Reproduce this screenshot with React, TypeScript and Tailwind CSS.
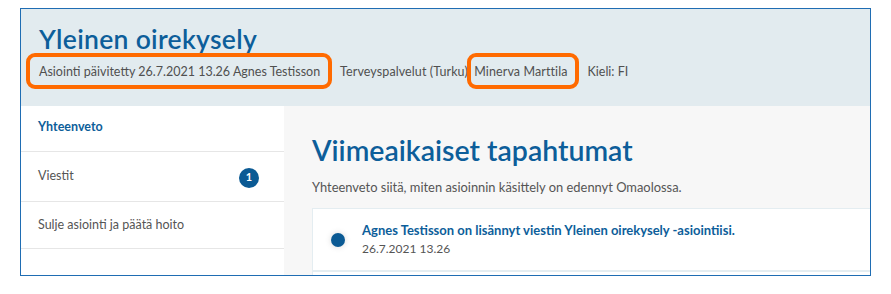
import React from "react";

export default function App() {
  return (
    <div className="w-[891px] h-[294px] bg-white pt-[8px] pl-[20px]" style={{ fontFamily: "Lato, 'Open Sans', sans-serif" }}>
      <div className="relative w-[851px] h-[268px] border border-[#1f6db3] overflow-hidden flex flex-col">
        {/* Header */}
        <div className="h-[97px] bg-[#e2ebef] pl-[18px] pt-[14px] shrink-0">
          <h1 className="text-[26.5px] leading-[32px] text-[#0d5e9a] font-semibold tracking-[0.3px]">Yleinen oirekysely</h1>
          <div className="mt-[9px] flex text-[12.5px] leading-[16px] text-[#505050]">
            <span>Asiointi päivitetty 26.7.2021 13.26 Agnes Testisson</span>
            <span className="ml-[20px] tracking-[0.1px]">Terveyspalvelut (Turku), Minerva Marttila</span>
            <span className="ml-[20px]">Kieli: FI</span>
          </div>
        </div>
        {/* Body */}
        <div className="flex flex-1 min-h-0">
          <div className="w-[263px] bg-white shrink-0 text-[12.5px] text-[#555]">
            <div className="h-[46px] border-b border-[#e6e6e6] flex items-center pl-[17px] font-bold text-[#0d5e9a] pb-[2px]">Yhteenveto</div>
            <div className="h-[50px] border-b border-[#e6e6e6] flex items-center justify-between pl-[17px] pr-[25px]">
              <span className="mb-[1px]">Viestit</span>
              <span className="w-[20px] h-[20px] rounded-full bg-[#0b5a94] text-white text-[11px] font-bold flex items-center justify-center mt-[2px]">1</span>
            </div>
            <div className="h-[47px] border-b border-[#e6e6e6] flex items-center pl-[17px]">Sulje asiointi ja päätä hoito</div>
          </div>
          <div className="flex-1 bg-[#f7f7f7] pl-[28px] pt-[26px] min-w-0">
            <h2 className="text-[28.5px] leading-[36px] text-[#0d5e9a] font-semibold whitespace-nowrap">Viimeaikaiset tapahtumat</h2>
            <p className="mt-[11px] text-[12.9px] leading-[16px] text-[#555] whitespace-nowrap">Yhteenveto siitä, miten asioinnin käsittely on edennyt Omaolossa.</p>
            <div className="mt-[13px] w-[620px] bg-white border border-[#e4edf1] h-[63px] flex items-center pl-[18px]">
              <span className="w-[14px] h-[14px] rounded-full bg-[#0b5a94] shadow-[0_0_6px_rgba(0,0,0,0.15)] shrink-0" />
              <div className="ml-[17px] pb-[2px]">
                <div className="text-[13px] leading-[16px] font-bold text-[#0d5e9a] whitespace-nowrap">Agnes Testisson on lisännyt viestin Yleinen oirekysely -asiointiisi.</div>
                <div className="mt-[3px] text-[12px] leading-[15px] text-[#555]">26.7.2021 13.26</div>
              </div>
            </div>
            <div className="w-[620px] bg-white border border-[#e4edf1] h-[40px]" />
          </div>
        </div>
        {/* Annotation boxes */}
        <div className="absolute left-[5px] top-[44px] w-[306px] h-[36px] border-[4px] border-[#ff6a00] rounded-[9px]" />
        <div className="absolute left-[446px] top-[44px] w-[112px] h-[36px] border-[4px] border-[#ff6a00] rounded-[9px]" />
      </div>
    </div>
  );
}
